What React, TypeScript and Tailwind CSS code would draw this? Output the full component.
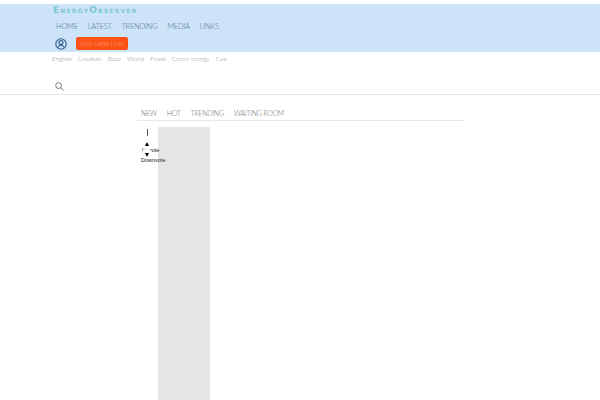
import React from "react";

const navLinks = ["HOME", "LATEST", "TRENDING", "MEDIA", "LINKS"];
const categories = ["English", "Croatian", "Buzz", "World", "Fossil", "Green energy", "Gas"];
const tabs = ["NEW", "HOT", "TRENDING", "WAITING ROOM"];

export default function App() {
  return (
    <div className="h-[400px] w-[600px] overflow-hidden bg-white font-['Lato',sans-serif] font-light">
      <header className="mt-1 h-12 bg-[#cce3f8] pl-[53px]">
        <div className="h-3 font-['DejaVu_Sans',sans-serif] text-[9px] font-bold leading-[13px] tracking-[1.2px] text-[#7fc7d3] [font-variant:small-caps]">
          EnergyObserver
        </div>
        <nav className="mt-[3px] flex h-4 gap-[10px] pl-[3px] text-[7.5px] leading-4 tracking-[-0.25px] text-[#4f7391]">
          {navLinks.map((link) => (
            <span key={link}>{link}</span>
          ))}
        </nav>
        <div className="mt-[2px] flex items-center gap-[9px] pl-[2px]">
          <svg width="12" height="12" viewBox="0 0 12 12" fill="none" stroke="#2f5d8a" strokeWidth="1.1">
            <circle cx="6" cy="6" r="5.2" />
            <circle cx="6" cy="4.6" r="2" />
            <path d="M2.6 9.6c.6-1.6 1.9-2.3 3.4-2.3s2.8.7 3.4 2.3" />
          </svg>
          <button className="h-[13px] w-[52px] rounded-[2px] bg-[#fc5216] text-center text-[6px] leading-[13px] tracking-[0.1px] text-[#f9b498]">
            ADD NEW LINK
          </button>
        </div>
      </header>

      <div className="mt-[2px] flex h-[10px] gap-[6px] pl-[52px] text-[6.5px] leading-[10px] text-[#8f898f]">
        {categories.map((cat) => (
          <span key={cat}>{cat}</span>
        ))}
      </div>

      <div className="flex h-[31px] items-end border-b border-[#e4e4e4] pb-[3px] pl-[55px]">
        <svg width="9" height="9" viewBox="0 0 9 9" fill="none" stroke="#666" strokeWidth="0.9">
          <circle cx="3.6" cy="3.6" r="2.9" />
          <path d="M5.7 5.7L8.6 8.6" />
        </svg>
      </div>

      <div className="ml-[137px] w-[327px]">
        <div className="flex h-[26px] items-end gap-[10px] border-b border-[#e8e8e8] pb-[2px] pl-[4px] text-[7px] tracking-[-0.25px] text-[#6f6f6f]">
          {tabs.map((tab) => (
            <span key={tab}>{tab}</span>
          ))}
        </div>
        <div className="mt-[6px] flex">
          <div className="relative z-10 flex w-[21px] flex-col items-start pt-[2px] font-['Liberation_Sans',sans-serif] text-[5.5px] font-normal leading-[6px] text-[#222]">
            <div className="ml-[10px] h-[7px] w-px bg-[#555]" />
            <div className="relative ml-[5px] mt-[3px] flex h-[10px] w-[10px] items-center justify-center rounded-full bg-white">
              <div className="h-0 w-0 border-x-[2.5px] border-b-[4px] border-x-transparent border-b-black" />
            </div>
            <span className="-mt-[2px] ml-[5px] whitespace-nowrap">Upvote</span>
            <div className="relative -mt-[4px] ml-[5px] flex h-[10px] w-[10px] items-end justify-center rounded-full bg-white pb-[2px]">
              <div className="h-0 w-0 border-x-[2.5px] border-t-[4px] border-x-transparent border-t-black" />
            </div>
            <span className="-mt-[2px] ml-[4px] whitespace-nowrap">Downvote</span>
          </div>
          <div className="h-[273px] w-[52px] bg-[#e5e5e5]" />
        </div>
      </div>
    </div>
  );
}
